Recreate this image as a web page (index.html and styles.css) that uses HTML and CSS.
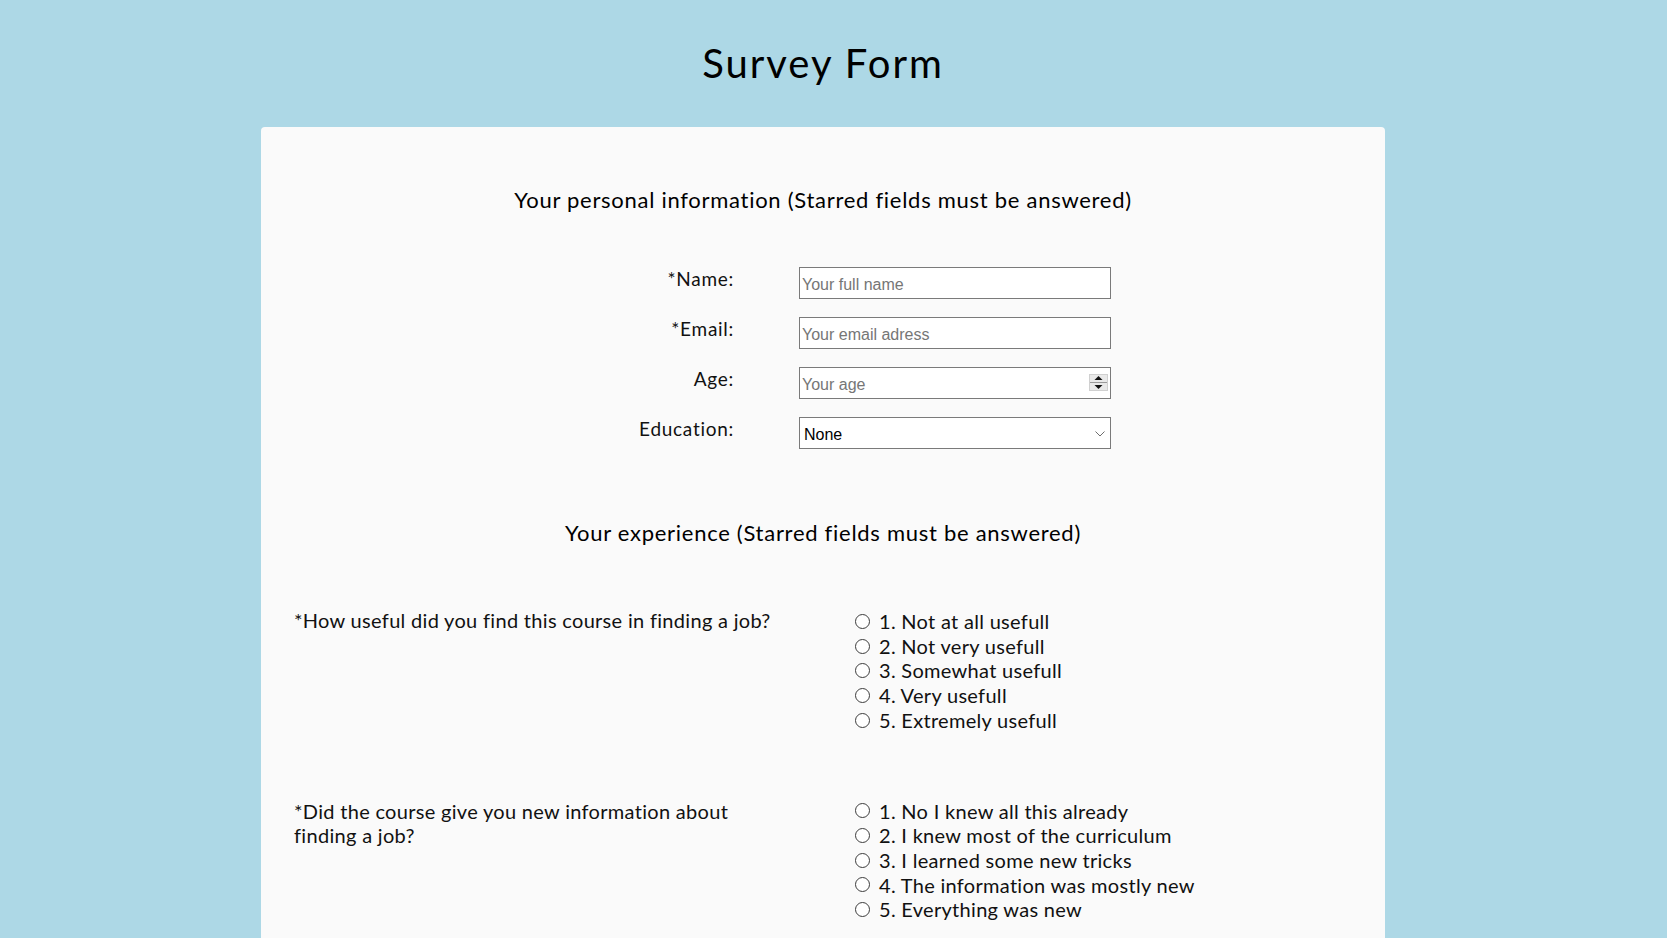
FILE: index.html
```html
<!DOCTYPE html>
<html lang="en">
<head>
<meta charset="utf-8">
<title>Survey Form</title>
<link rel="stylesheet" href="styles.css">
</head>
<body>
<header class="page-header">
  <h1 class="title">Survey Form</h1>
</header>
<main class="card">
  <form class="survey">
    <h2 class="section-title">Your personal information (Starred fields must be answered)</h2>
    <div class="fields">
      <div class="field">
        <label class="field-label" for="name">*Name:</label>
        <input class="control" type="text" id="name" placeholder="Your full name">
      </div>
      <div class="field">
        <label class="field-label" for="email">*Email:</label>
        <input class="control" type="email" id="email" placeholder="Your email adress">
      </div>
      <div class="field">
        <label class="field-label" for="age">Age:</label>
        <div class="control-wrap">
          <input class="control number" type="number" id="age" placeholder="Your age">
          <svg class="spinner" width="19" height="17" viewBox="0 0 19 17" aria-hidden="true">
            <rect x="0.5" y="0.5" width="18" height="16" fill="#e9e9e9" stroke="#d0d0d0"/>
            <line x1="1" y1="8.5" x2="18" y2="8.5" stroke="#9a9a9a" stroke-width="1"/>
            <polygon points="5.5,6 13.5,6 9.5,2" fill="#111"/>
            <polygon points="5.5,11 13.5,11 9.5,15" fill="#111"/>
          </svg>
        </div>
      </div>
      <div class="field">
        <label class="field-label" for="education">Education:</label>
        <div class="control-wrap">
          <select class="control select" id="education">
            <option>None</option>
            <option>High school</option>
            <option>Bachelor</option>
            <option>Master</option>
          </select>
          <svg class="chevron" width="10" height="6" viewBox="0 0 10 6" aria-hidden="true">
            <polyline points="0.5,0.5 5,5 9.5,0.5" fill="none" stroke="#6d6d6d" stroke-width="1"/>
          </svg>
        </div>
      </div>
    </div>

    <h2 class="section-title second">Your experience (Starred fields must be answered)</h2>

    <div class="question">
      <p class="question-text">*How useful did you find this course in finding a job?</p>
      <div class="options first">
        <label class="option"><input type="radio" name="q1" value="1"><span>1. Not at all usefull</span></label>
        <label class="option"><input type="radio" name="q1" value="2"><span>2. Not very usefull</span></label>
        <label class="option"><input type="radio" name="q1" value="3"><span>3. Somewhat usefull</span></label>
        <label class="option"><input type="radio" name="q1" value="4"><span>4. Very usefull</span></label>
        <label class="option"><input type="radio" name="q1" value="5"><span>5. Extremely usefull</span></label>
      </div>
    </div>

    <div class="question">
      <p class="question-text">*Did the course give you new information about finding a job?</p>
      <div class="options">
        <label class="option"><input type="radio" name="q2" value="1"><span>1. No I knew all this already</span></label>
        <label class="option"><input type="radio" name="q2" value="2"><span>2. I knew most of the curriculum</span></label>
        <label class="option"><input type="radio" name="q2" value="3"><span>3. I learned some new tricks</span></label>
        <label class="option"><input type="radio" name="q2" value="4"><span>4. The information was mostly new</span></label>
        <label class="option"><input type="radio" name="q2" value="5"><span>5. Everything was new</span></label>
      </div>
    </div>
  </form>
</main>
</body>
</html>
```

FILE: styles.css
```css
html, body {
  margin: 0;
  padding: 0;
}

body {
  background: #add8e6;
  color: #111;
  font-family: Lato, "Open Sans", sans-serif;
  padding-right: 21px;
}

.page-header {
  padding-top: 39px;
}

.title {
  margin: 0;
  text-align: center;
  font-size: 40px;
  line-height: 48px;
  font-weight: 400;
  letter-spacing: 2px;
  color: #000;
}

.card {
  width: 1124px;
  margin: 40px auto 0;
  background: #fafafa;
  border-radius: 4px;
  padding: 58.5px 33px 120px;
  box-sizing: border-box;
}

.section-title {
  margin: 0;
  text-align: center;
  font-size: 22px;
  line-height: 28px;
  font-weight: 400;
  letter-spacing: 0.72px;
  color: #000;
}

.section-title.second {
  margin-top: 69.6px;
}

.fields {
  margin-top: 53.5px;
  display: flex;
  flex-direction: column;
  gap: 18px;
}

.field {
  display: grid;
  grid-template-columns: 440px 312px;
  column-gap: 65px;
  align-items: start;
}

.field-label {
  text-align: right;
  font-size: 19px;
  line-height: 24px;
  letter-spacing: 0.72px;
}

.control-wrap {
  position: relative;
}

.control {
  box-sizing: border-box;
  width: 312px;
  height: 32px;
  margin: 0;
  border: 1px solid #7a7a7a;
  border-radius: 0;
  background: #fff;
  padding: 3px 2px 0;
  font-family: "Liberation Sans", Arial, sans-serif;
  font-size: 16px;
  color: #000;
  outline: none;
}

.control::placeholder {
  color: #767676;
}

.number {
  -moz-appearance: textfield;
}

.number::-webkit-inner-spin-button,
.number::-webkit-outer-spin-button {
  -webkit-appearance: none;
  margin: 0;
}

.spinner {
  position: absolute;
  right: 3px;
  top: 7px;
  pointer-events: none;
}

.select {
  -webkit-appearance: none;
  appearance: none;
  padding: 2px 4px 0;
}

.chevron {
  position: absolute;
  right: 6px;
  top: 14px;
  pointer-events: none;
}

.question {
  margin-top: 61.4px;
  display: grid;
  grid-template-columns: 488px 1fr;
  column-gap: 74px;
  align-items: start;
}

.question + .question {
  margin-top: 66px;
}

.question-text {
  margin: 0;
  font-size: 20px;
  line-height: 24.4px;
  letter-spacing: 0.31px;
}

.options {
  display: flex;
  flex-direction: column;
}

.options.first {
  padding-top: 1px;
}

.option {
  display: flex;
  align-items: center;
  font-size: 20px;
  line-height: 24.7px;
  letter-spacing: 0.3px;
}

.option input {
  -webkit-appearance: none;
  appearance: none;
  box-sizing: border-box;
  width: 15px;
  height: 15px;
  margin: 0 9px 0 -1px;
  border: 1.3px solid #3c3c3c;
  border-radius: 50%;
  background: #fff;
  flex: none;
}
```
